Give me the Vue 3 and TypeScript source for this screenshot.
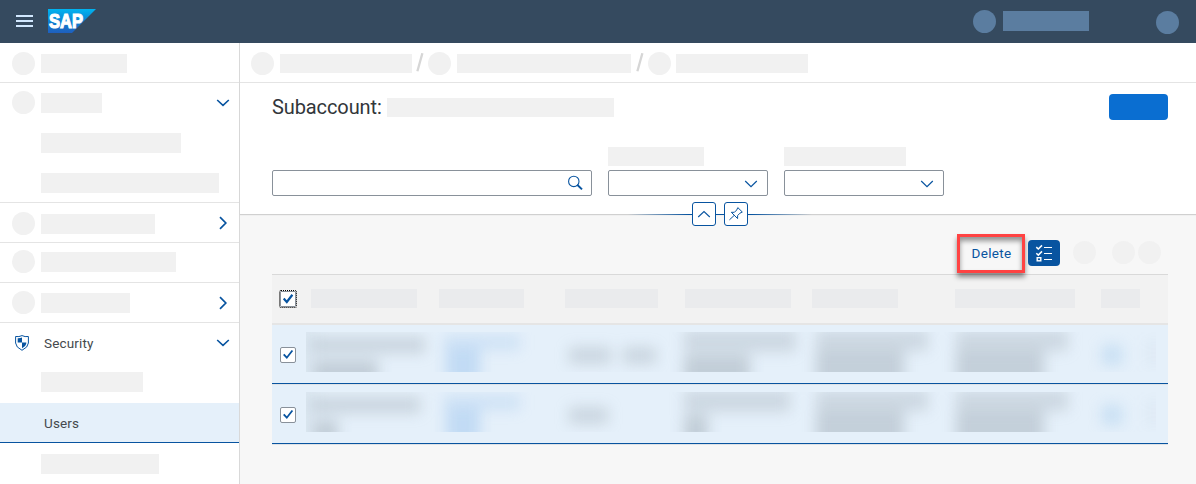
<script setup lang="ts">
interface NavRow {
  top: number
  width?: number
  height?: number
  dot?: boolean
  dotTop?: number
  label?: string
  shield?: boolean
  arrow?: 'down' | 'right'
  line?: boolean
  active?: boolean
}

const navRows: NavRow[] = [
  { top: 11, width: 86, height: 19, dot: true, dotTop: 9, line: true },
  { top: 10, width: 61, dot: true, dotTop: 8, arrow: 'down' },
  { top: 10, width: 140 },
  { top: 10, width: 178, line: true },
  { top: 11, width: 114, dot: true, dotTop: 9, arrow: 'right', line: true },
  { top: 9, width: 135, dot: true, dotTop: 7, line: true },
  { top: 10, width: 89, dot: true, dotTop: 8, arrow: 'right', line: true },
  { top: 0, label: 'Security', shield: true, arrow: 'down' },
  { top: 9, width: 102 },
  { top: 0, label: 'Users', active: true },
  { top: 11, width: 118 },
]

const crumbs = [132, 174, 132]

const columns = [
  { gap: 14, width: 106 },
  { gap: 22, width: 85 },
  { gap: 41, width: 93 },
  { gap: 27, width: 106 },
  { gap: 21, width: 86 },
  { gap: 57, width: 120 },
  { gap: 26, width: 39 },
]

type Blob = [x: number, y: number, w: number, h: number, fill: string, opacity: number]
const ink = '#8e9aa5'
const blue = '#7fb2ea'

function blobs(first: number, firstSub: number, third: number, fourth: number, fourthSub: number, extra: boolean): Blob[] {
  const list: Blob[] = [
    [-12, -10, 22, 60, ink, 0.1],
    [5, 5, first, 16, ink, 0.32],
    [8, 28, firstSub, 26, ink, 0.4],
    [138, 3, 76, 15, blue, 0.22],
    [140, 17, 34, 34, blue, 0.34],
    [263, 15, third + 4, 17, ink, 0.3],
    [378, -2, fourth, 22, ink, 0.28],
    [378, 23, fourthSub, 30, ink, 0.4],
    [510, -2, 112, 21, ink, 0.28],
    [510, 19, 88, 36, ink, 0.38],
    [650, -2, 112, 21, ink, 0.28],
    [650, 19, 88, 36, ink, 0.38],
    [796, 13, 20, 20, '#9fc8ea', 0.4],
    [840, 8, 18, 26, ink, 0.06],
  ]
  if (extra) list.push([317, 15, 33, 17, ink, 0.3])
  return list
}

const records = [
  { id: 1, blobs: blobs(114, 64, 38, 112, 66, true) },
  { id: 2, blobs: blobs(109, 24, 35, 106, 24, false) },
]
</script>

<template>
  <div class="page">
    <header class="shell">
      <svg class="burger" width="17" height="12" viewBox="0 0 17 12">
        <path d="M0 1h17M0 6h17M0 11h17" stroke="#d1e8ff" stroke-width="2" />
      </svg>
      <svg class="logo" width="48" height="24" viewBox="0 0 48 24">
        <defs>
          <linearGradient id="sap" x1="0" y1="0" x2="0" y2="1">
            <stop offset="0" stop-color="#00b4f0" />
            <stop offset=".5" stop-color="#0d83d3" />
            <stop offset="1" stop-color="#1f5fbe" />
          </linearGradient>
        </defs>
        <path d="M0 0H48L24 24H0Z" fill="url(#sap)" />
        <text x="1" y="18.6" textLength="34" lengthAdjust="spacingAndGlyphs">SAP</text>
      </svg>
      <span class="spacer"></span>
      <span class="dot tone product"></span>
      <span class="tone account"></span>
      <span class="dot tone avatar"></span>
    </header>

    <div class="body">
      <nav class="side">
        <div
          v-for="(row, i) in navRows"
          :key="i"
          class="nav-row"
          :class="{ line: row.line, active: row.active }"
        >
          <span class="lead">
            <span v-if="row.dot" class="dot" :style="{ marginTop: row.dotTop + 'px' }"></span>
            <svg v-if="row.shield" class="shield" width="14" height="16" viewBox="0 0 14 16">
              <path d="M.6 1.5Q4 2.1 7 .6Q10 2.1 13.4 1.5V8Q13.2 12.3 7 15.3Q.8 12.3.6 8Z" fill="#fff" stroke="#0854a0" stroke-width="1" />
              <path d="M2.7 3.2Q5 3.3 7 2.6V7.4H2.7ZM7 7.4H11.3V8.3Q11 11.1 7 13.2Z" fill="#0854a0" />
            </svg>
          </span>
          <span v-if="row.label" class="label">{{ row.label }}</span>
          <span
            v-else
            class="bar"
            :style="{ width: row.width + 'px', height: (row.height ?? 20) + 'px', marginTop: row.top + 'px' }"
          ></span>
          <svg v-if="row.arrow === 'down'" class="arrow down" width="14" height="8" viewBox="0 0 14 8">
            <path d="M1.2 1 7 6.4 12.8 1" fill="none" stroke="#0854a0" stroke-width="1.6" />
          </svg>
          <svg v-if="row.arrow === 'right'" class="arrow right" width="8" height="14" viewBox="0 0 8 14">
            <path d="M1 1.2 6.8 7 1 12.8" fill="none" stroke="#0854a0" stroke-width="1.7" />
          </svg>
        </div>
      </nav>

      <main class="main">
        <div class="crumbs">
          <template v-for="(w, i) in crumbs" :key="i">
            <svg v-if="i > 0" class="slash" :class="{ second: i === 2 }" width="8" height="19" viewBox="0 0 8 19">
              <path d="M1.4 18.2 6.4.2" stroke="#d6d6d6" stroke-width="2.3" />
            </svg>
            <span class="dot"></span>
            <span class="bar crumb" :class="{ tight: i === 2 }" :style="{ width: w + 'px' }"></span>
          </template>
        </div>

        <section class="head">
          <div class="title-row">
            <h1>Subaccount:</h1>
            <span class="bar name"></span>
            <span class="spacer"></span>
            <button class="primary" type="button"></button>
          </div>
          <div class="filters">
            <div class="field search">
              <svg width="16" height="16" viewBox="0 0 16 16">
                <circle cx="6.8" cy="6.4" r="5.2" fill="none" stroke="#0854a0" stroke-width="1.1" />
                <path d="M10.2 9.8 15 14.4" stroke="#0854a0" stroke-width="2" />
              </svg>
            </div>
            <div v-for="w in [96, 122]" :key="w" class="group">
              <span class="bar caption" :style="{ width: w + 'px' }"></span>
              <div class="field">
                <svg width="14" height="8" viewBox="0 0 14 8">
                  <path d="M1.2 1 7 6.7 12.8 1" fill="none" stroke="#0854a0" stroke-width="1.2" />
                </svg>
              </div>
            </div>
          </div>
          <div class="pins">
            <span class="pin-btn">
              <svg width="22" height="22" viewBox="0 0 22 22">
                <path d="M5.2 14 11 8.6 16.8 14" fill="none" stroke="#0854a0" stroke-width="1.1" />
              </svg>
            </span>
            <span class="pin-btn">
              <svg width="22" height="22" viewBox="0 0 22 22">
                <path d="M12.8 4.6 17.3 9 14.9 10.2 12.6 12.6V15.6L6.3 9.3 9.4 9.3 11.7 7Z M9.2 12.4 4.4 16.9" fill="none" stroke="#0854a0" stroke-width="1" stroke-linejoin="round" />
              </svg>
            </span>
          </div>
        </section>

        <section class="content">
          <div class="toolbar">
            <span class="delete">Delete</span>
            <span class="multi">
              <svg width="32" height="26" viewBox="0 0 32 26">
                <g fill="none" stroke="#fff">
                  <path d="M8.3 7.1 10.3 9 14 5.4M8.3 13.2 10.3 15.1 14 11.4" stroke-width="1.5" />
                  <path d="M16 7.5h8M16 13.5h8M16 19.5h8" stroke-width="1" />
                  <rect x="9.2" y="17.7" width="3.6" height="3.1" stroke-width="1.4" />
                </g>
              </svg>
            </span>
            <span class="dot action one"></span>
            <span class="dot action two"></span>
            <span class="dot action three"></span>
          </div>

          <div class="table">
            <div class="thead">
              <span class="check focus">
                <svg width="14" height="14" viewBox="0 0 14 14">
                  <path d="M2.7 6.6 5.8 10 11.4 2.8" fill="none" stroke="#0854a0" stroke-width="2.2" />
                </svg>
              </span>
              <span
                v-for="(c, i) in columns"
                :key="i"
                class="col"
                :style="{ width: c.width + 'px', marginLeft: c.gap + 'px' }"
              ></span>
            </div>
            <div v-for="record in records" :key="record.id" class="trow">
              <span class="check">
                <svg width="14" height="14" viewBox="0 0 14 14">
                  <path d="M2.7 6.3 5.8 9.7 11.4 2.5" fill="none" stroke="#0854a0" stroke-width="1.8" />
                </svg>
              </span>
              <svg class="redacted" width="850" height="40" viewBox="0 0 850 40">
                <defs>
                  <filter
                    :id="'soft' + record.id"
                    x="-30"
                    y="-30"
                    width="910"
                    height="100"
                    filterUnits="userSpaceOnUse"
                    color-interpolation-filters="sRGB"
                  >
                    <feGaussianBlur stdDeviation="7" />
                  </filter>
                </defs>
                <g :filter="`url(#soft${record.id})`">
                  <rect
                    v-for="(b, i) in record.blobs"
                    :key="i"
                    :x="b[0]"
                    :y="b[1]"
                    :width="b[2]"
                    :height="b[3]"
                    :fill="b[4]"
                    :opacity="b[5]"
                  />
                </g>
              </svg>
            </div>
          </div>
        </section>
      </main>
    </div>
  </div>
</template>

<style>
html,
body {
  overflow: hidden;
}
</style>

<style scoped>
* {
  box-sizing: border-box;
}
.page {
  width: 1196px;
  height: 484px;
  overflow: hidden;
  background: #fff;
  color: #32363a;
  font-family: Roboto, "Liberation Sans", sans-serif;
  font-size: 14px;
}
.spacer {
  flex: 1;
}
.dot {
  width: 23px;
  height: 23px;
  flex: none;
  border-radius: 50%;
  background: #f1f1f1;
}
.bar {
  display: block;
  flex: none;
  background: #f1f1f1;
}
.shell {
  display: flex;
  height: 43px;
  padding: 0 17px 0 16px;
  background: #354a5f;
}
.burger {
  margin-top: 15px;
}
.logo {
  margin: 9px 0 0 15px;
}
.logo text {
  font: bold 20px "Liberation Sans", sans-serif;
  fill: #fff;
  stroke: #fff;
  stroke-width: 1.2px;
}
.tone {
  background: #5b7da0;
}
.product {
  margin: 10px 7px 0 0;
}
.account {
  width: 86px;
  height: 20px;
  margin: 11px 67px 0 0;
}
.avatar {
  margin-top: 11px;
}
.body {
  display: flex;
  height: 441px;
}
.side {
  width: 240px;
  flex: none;
  border-right: 1px solid #d9d9d9;
}
.nav-row {
  display: flex;
  height: 40px;
  border-bottom: 1px solid transparent;
}
.nav-row.line {
  border-bottom-color: #e4e4e4;
}
.nav-row.active {
  background: #e5f0fa;
  border-bottom-color: #0854a0;
}
.lead {
  display: flex;
  align-items: flex-start;
  width: 41px;
  flex: none;
  padding-left: 12px;
}
.shield {
  margin: 12px 0 0 3px;
}
.label {
  padding-left: 3px;
  line-height: 40px;
  font-size: 13.5px;
  letter-spacing: 0.15px;
  color: #45494d;
}
.arrow {
  flex: none;
  margin-left: auto;
}
.arrow.down {
  margin-top: 16px;
  margin-right: 9px;
}
.arrow.right {
  margin-top: 13px;
  margin-right: 12px;
}
.main {
  display: flex;
  flex-direction: column;
  flex: 1;
}
.crumbs {
  display: flex;
  height: 40px;
  flex: none;
  padding: 9px 0 0 11px;
  border-bottom: 1px solid #e4e4e4;
}
.crumb {
  height: 19px;
  margin: 2px 0 0 6px;
}
.crumb.tight {
  margin-left: 5px;
}
.slash {
  flex: none;
  margin: 1px 4px 0 4px;
}
.slash.second {
  margin-left: 5px;
}
.head {
  position: relative;
  z-index: 1;
  height: 131px;
  flex: none;
  padding: 11px 28px 0 32px;
  background: #fff;
  box-shadow: 0 1px 1px #d0d0d0;
}
.title-row {
  display: flex;
  height: 53px;
}
h1 {
  width: 115px;
  margin: 0;
  font-size: 20px;
  font-weight: 400;
  line-height: 26px;
  letter-spacing: -0.1px;
  white-space: nowrap;
}
.name {
  width: 227px;
  height: 19px;
  margin-top: 4px;
}
.primary {
  width: 59px;
  height: 26px;
  border: 0;
  border-radius: 4px;
  background: #0a6ed1;
}
.filters {
  display: flex;
  align-items: flex-end;
  gap: 16px;
  height: 49px;
}
.field {
  display: flex;
  align-items: center;
  justify-content: flex-end;
  width: 160px;
  height: 26px;
  padding-right: 9px;
  border: 1px solid #89919a;
  border-radius: 2px;
}
.field svg {
  margin-top: 2px;
}
.field.search {
  width: 320px;
  padding-right: 8px;
}
.field.search svg {
  margin-top: 0;
}
.caption {
  height: 19px;
  margin-bottom: 4px;
}
.pins {
  position: absolute;
  left: 388px;
  bottom: -12px;
  display: flex;
  justify-content: center;
  gap: 8px;
  width: 184px;
  height: 24px;
  background: linear-gradient(90deg, rgba(8, 84, 160, 0), #0854a0 33%, #0854a0 67%, rgba(8, 84, 160, 0)) 0 12px / 100% 1px no-repeat;
}
.pin-btn {
  width: 24px;
  height: 24px;
  border: 1px solid #0854a0;
  border-radius: 3px;
  background: #fff;
}
.pin-btn svg {
  display: block;
}
.content {
  flex: 1;
  padding: 20px 28px 0 32px;
  background: #f7f7f7;
}
.toolbar {
  position: relative;
  z-index: 1;
  display: flex;
  justify-content: flex-end;
  height: 40px;
}
.delete {
  width: 68px;
  height: 39px;
  margin-right: 3px;
  border: 3px solid #ff4343;
  box-shadow: 0 4px 5px rgba(0, 0, 0, 0.45), inset 0 4px 5px rgba(0, 0, 0, 0.4);
  color: #0854a0;
  font-size: 13.5px;
  line-height: 33px;
  text-align: center;
  letter-spacing: 0.35px;
  text-indent: 1px;
}
.multi {
  width: 32px;
  height: 26px;
  margin-top: 6px;
  border-radius: 4px;
  background: #0854a0;
}
.multi svg {
  display: block;
}
.action {
  margin-top: 7px;
}
.one {
  margin-left: 13px;
}
.two {
  margin-left: 16px;
}
.three {
  margin: 7px 7px 0 3px;
}
.table {
  border-top: 1px solid #d9d9d9;
}
.thead {
  display: flex;
  height: 50px;
  padding: 14px 0 0 8px;
  border-bottom: 2px solid #e5e5e5;
  background: #f2f2f2;
}
.col {
  height: 19px;
  flex: none;
  background: #eaebed;
}
.check {
  width: 16px;
  height: 16px;
  flex: none;
  border: 1px solid #89919a;
  border-radius: 2px;
  background: #fff;
}
.check svg {
  display: block;
}
.check.focus {
  margin: 2px 1px 0 0;
  border-radius: 1px;
  outline: 1px dotted #000;
}
.trow {
  display: flex;
  height: 60px;
  padding: 7px 0 0 8px;
  background: #e5f0fa;
  border-bottom: 1px solid #e0e3e6;
  box-shadow: inset 0 -1px #0854a0;
}
.trow .check {
  margin: 15px 10px 0 0;
}
.redacted {
  display: block;
  overflow: hidden;
}
</style>
